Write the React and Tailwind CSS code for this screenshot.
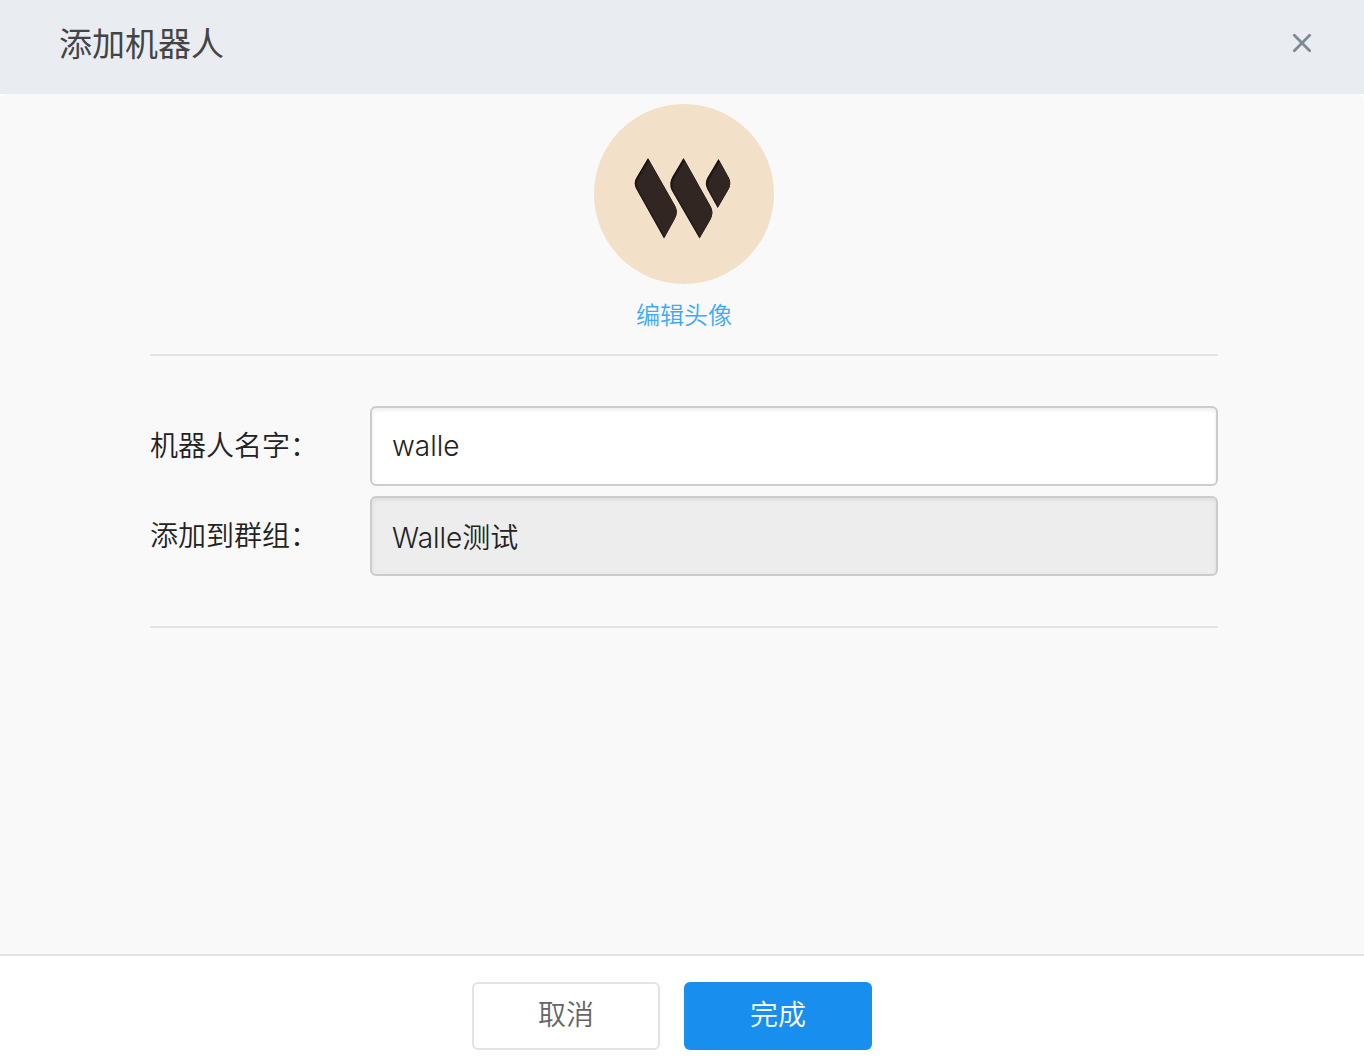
const shapes = [
  "M54 54 L43 72.5 Q39 78.5 42 84.5 L70 134.500 L80.5 115.500 Q84.5 109 81.5 102.500 Z",
  "M89.5 54 L78.500 72.5 Q74.500 79.5 77.500 86 L105.500 134.500 L116.500 115.500 Q120 109 117 103 Z",
  "M124.500 55 L135 74 Q137.500 79.500 135 84.500 L123.700 104 L113.200 85 Q110.500 79.500 113.200 74 Z",
];

function Logo() {
  return (
    <svg viewBox="0 0 180 180" className="size-[180px]" role="img" aria-label="walle">
      <defs>
        <filter id="soft" x="-20%" y="-20%" width="140%" height="140%">
          <feGaussianBlur stdDeviation="1.2" />
        </filter>
        {shapes.map((d, i) => (
          <clipPath id={`blade-${i}`} key={i}>
            <path d={d} />
          </clipPath>
        ))}
      </defs>
      <circle cx="90" cy="90" r="90" fill="#f2e0c9" />
      {shapes.map((d, i) => (
        <g key={i}>
          <path d={d} fill="none" stroke="#f5e6d2" strokeWidth="2" />
          <path d={d} fill="#140d0c" />
          <g clipPath={`url(#blade-${i})`}>
            <path d={d} fill="#322524" transform="translate(1.5 1)" filter="url(#soft)" />
          </g>
        </g>
      ))}
    </svg>
  );
}

function Field({ id, label, ...props }) {
  return (
    <div className="flex items-center">
      <label htmlFor={id} className="w-[220px] shrink-0 text-[28px] leading-10 font-[350] text-[#222]">
        {label}
      </label>
      <input
        id={id}
        type="text"
        className="h-20 min-w-0 flex-1 rounded-md border-2 border-[#ccc] bg-white px-5 text-[28px] leading-10 font-[350] text-[#222] shadow-[inset_0_2px_4px_rgba(0,0,0,0.08)] disabled:bg-[#ededed]"
        {...props}
      />
    </div>
  );
}

export default function App() {
  return (
    <div className="flex min-h-screen flex-col bg-white font-['Inter','Noto_Sans_CJK_SC',sans-serif]">
      <header className="flex items-start justify-between bg-[#e9edf2] pt-5 pr-[50px] pb-[26px] pl-[59px]">
        <h1 className="text-[33px] leading-[48px] font-normal text-[#444]">添加机器人</h1>
        <button type="button" aria-label="关闭" className="mt-[11px] size-6 text-[#7d8a92]">
          <svg viewBox="0 0 24 24" fill="none" stroke="currentColor" strokeWidth="2.800" strokeLinecap="round">
            <path d="M4.300 4.300 19.700 19.700M19.700 4.300 4.300 19.700" />
          </svg>
        </button>
      </header>

      <main className="flex-1 rounded-t-md bg-[#f9f9f9] pt-[10px] pr-[146px] pl-[150px]">
        <div className="flex flex-col items-center border-b-2 border-[#e3e3e3] pb-5">
          <Logo />
          <button type="button" className="mt-[14px] text-2xl leading-9 font-[350] text-[#3daaf8]">
            编辑头像
          </button>
        </div>
        <form className="flex flex-col gap-[10px] border-b-2 border-[#e3e3e3] py-[50px]">
          <Field id="robot-name" label="机器人名字：" defaultValue="walle" />
          <Field id="robot-group" label="添加到群组：" defaultValue="Walle测试" disabled />
        </form>
      </main>

      <footer className="flex justify-center gap-6 border-t-2 border-[#e3e3e3] pt-[26px] pr-5 pb-[14px]">
        <button type="button" className="h-[68px] w-[188px] rounded-md border-2 border-[#e3e3e3] bg-white pb-0.5 text-[28px] leading-10 font-[350] text-[#666]">
          取消
        </button>
        <button type="button" className="h-[68px] w-[188px] rounded-md bg-[#188eee] pb-0.5 text-[28px] leading-10 font-[350] text-white">
          完成
        </button>
      </footer>
    </div>
  );
}
